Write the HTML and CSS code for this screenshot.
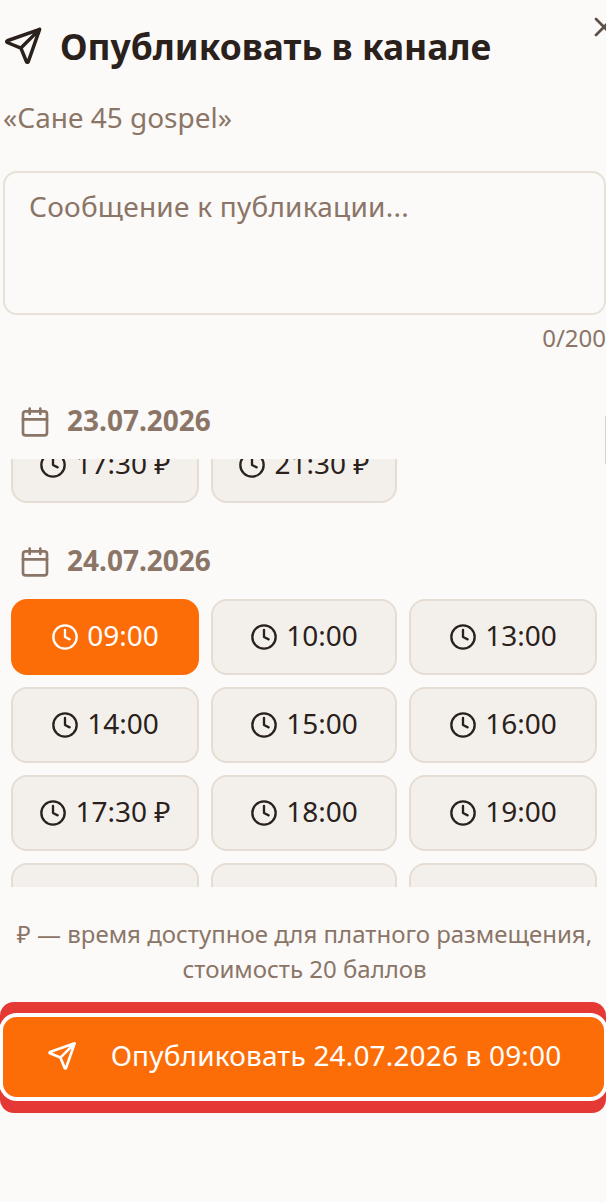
FILE: index.html
```html
<!DOCTYPE html>
<html lang="ru">
<head>
    <meta charset="UTF-8">
    <meta name="viewport" content="width=device-width, initial-scale=1.0">
    <title>Опубликовать в канале</title>
    <link rel="stylesheet" href="styles.css">
</head>
<body>
    <svg class="sprite" width="0" height="0">
        <symbol id="send" viewBox="0 0 24 24">
            <path d="M21.5 2.5 10.8 13.2M21.5 2.5 15 21a.55.55 0 0 1-1 .02l-3.2-7.82L3 10a.55.55 0 0 1 .02-1z"/>
        </symbol>
        <symbol id="clock" viewBox="0 0 24 24">
            <circle cx="12" cy="12" r="10"/>
            <path d="M12 6v6l4 2"/>
        </symbol>
        <symbol id="cal" viewBox="0 0 24 24">
            <path d="M8 2v4M16 2v4M3 10h18"/>
            <rect x="3" y="4" width="18" height="18" rx="2"/>
        </symbol>
    </svg>

    <div class="dialog">
        <button class="close" type="button">
            <svg viewBox="0 0 24 24" width="32" height="32"><path d="M18 6 6 18M6 6l12 12"/></svg>
        </button>

        <h2 class="title">
            <svg class="title-icon"><use href="#send"/></svg>
            Опубликовать в канале
        </h2>
        <p class="channel">«Сане 45 gospel»</p>

        <textarea class="message" placeholder="Сообщение к публикации..."></textarea>
        <div class="counter">0/200</div>

        <div class="scrollbar"></div>

        <div class="date-label">
            <svg class="cal-icon"><use href="#cal"/></svg>
            23.07.2026
        </div>

        <div class="slots-clip top-clip">
            <div class="slots first-row">
                <button class="slot" type="button"><svg class="clock-icon"><use href="#clock"/></svg>17:30 ₽</button>
                <button class="slot" type="button"><svg class="clock-icon"><use href="#clock"/></svg>21:30 ₽</button>
            </div>
        </div>

        <div class="date-label second">
            <svg class="cal-icon"><use href="#cal"/></svg>
            24.07.2026
        </div>

        <div class="slots-clip bottom-clip">
            <div class="slots">
                <button class="slot active" type="button"><svg class="clock-icon"><use href="#clock"/></svg>09:00</button>
                <button class="slot" type="button"><svg class="clock-icon"><use href="#clock"/></svg>10:00</button>
                <button class="slot" type="button"><svg class="clock-icon"><use href="#clock"/></svg>13:00</button>
                <button class="slot" type="button"><svg class="clock-icon"><use href="#clock"/></svg>14:00</button>
                <button class="slot" type="button"><svg class="clock-icon"><use href="#clock"/></svg>15:00</button>
                <button class="slot" type="button"><svg class="clock-icon"><use href="#clock"/></svg>16:00</button>
                <button class="slot" type="button"><svg class="clock-icon"><use href="#clock"/></svg>17:30 ₽</button>
                <button class="slot" type="button"><svg class="clock-icon"><use href="#clock"/></svg>18:00</button>
                <button class="slot" type="button"><svg class="clock-icon"><use href="#clock"/></svg>19:00</button>
                <button class="slot" type="button"></button>
                <button class="slot" type="button"></button>
                <button class="slot" type="button"></button>
            </div>
        </div>

        <p class="note">₽ — время доступное для платного размещения,<br>стоимость 20 баллов</p>

        <div class="submit-wrap">
            <button class="submit" type="button">
                <svg class="submit-icon"><use href="#send"/></svg>
                Опубликовать 24.07.2026 в 09:00
            </button>
        </div>
    </div>
</body>
</html>
```

FILE: styles.css
```css
html, body {
    margin: 0;
    height: 1202px;
    overflow: hidden;
}
body {
    background-color: #fcfaf8;
    color: #2b211c;
    font-family: "Noto Sans", sans-serif;
}
.sprite {
    display: block;
    height: 0;
}
svg {
    fill: none;
    stroke: currentColor;
    stroke-width: 2;
    stroke-linecap: round;
    stroke-linejoin: round;
    flex-shrink: 0;
}
.dialog {
    position: relative;
    padding: 23px 0 0 3px;
}
.close {
    position: absolute;
    top: 11px;
    right: -14px;
    padding: 0;
    border: none;
    background: none;
    color: #5c5048;
    display: flex;
}
.title {
    display: flex;
    align-items: center;
    gap: 16px;
    margin: 0;
    height: 46px;
    font-size: 35.4px;
    font-weight: 700;
    line-height: 46px;
}
.title-icon {
    width: 42px;
    height: 42px;
    margin-left: -1px;
}
.channel {
    margin: 26px 0 0;
    font-size: 28px;
    line-height: 44px;
    height: 44px;
    color: #8a7567;
}
.message {
    display: block;
    box-sizing: border-box;
    width: 603px;
    height: 144px;
    margin-top: 32px;
    padding: 14px 24px;
    border: 2px solid #e8e1d8;
    border-radius: 14px;
    background: #fcfaf8;
    font-family: inherit;
    font-size: 28px;
    letter-spacing: 0.24px;
    line-height: 38px;
    resize: none;
    outline: none;
}
.message::placeholder {
    color: #8a7567;
    opacity: 1;
}
.counter {
    margin-top: 7px;
    text-align: right;
    font-size: 24px;
    line-height: 32px;
    color: #8a7567;
    width: 603px;
}
.scrollbar {
    position: absolute;
    top: 416px;
    right: 0;
    width: 1px;
    height: 48px;
    background: #d9d2ca;
}
.date-label {
    display: flex;
    align-items: center;
    gap: 16px;
    box-sizing: border-box;
    height: 44px;
    padding-bottom: 2px;
    margin: 45px 0 0 16px;
    font-size: 28px;
    font-weight: 700;
    color: #8a7567;
}
.cal-icon {
    width: 32px;
    height: 32px;
    margin-top: 4px;
}
.second {
    margin-top: 36px;
}
.slots-clip {
    overflow: hidden;
    margin-left: 8px;
    width: 586px;
}
.top-clip {
    height: 44px;
    margin-top: 16px;
}
.bottom-clip {
    height: 288px;
    margin-top: 16px;
}
.slots {
    display: grid;
    grid-template-columns: 188px 186px 188px;
    gap: 12px;
}
.first-row {
    margin-top: -32px;
}
.slot {
    display: flex;
    align-items: center;
    justify-content: center;
    gap: 8px;
    height: 76px;
    padding: 0 0 4px;
    border: 2px solid #e5ddd3;
    border-radius: 16px;
    background-color: #f3f0eb;
    color: #2b211c;
    font-family: inherit;
    font-size: 28px;
}
.slot.active {
    background-color: #fc6d08;
    border-color: #fc6d08;
    color: #fff;
}
.clock-icon {
    width: 28px;
    height: 28px;
    margin-top: 4px;
}
.note {
    margin: 29px 0 0;
    text-align: center;
    font-size: 24px;
    line-height: 35px;
    color: #8a7567;
}
.submit-wrap {
    margin: 16px 0 0 -3px;
    width: 606px;
    height: 111px;
    box-sizing: border-box;
    padding: 15px 0 0 3px;
    background-color: #e53935;
    border-radius: 14px;
}
.submit {
    display: flex;
    align-items: center;
    justify-content: center;
    gap: 33px;
    box-sizing: border-box;
    width: 601px;
    height: 80px;
    padding: 0 0 4px;
    border: 0;
    border-radius: 14px;
    outline: 4px solid #fff;
    background-color: #fc6d08;
    color: #fff;
    font-family: inherit;
    font-size: 28px;
    letter-spacing: 0.16px;
}
.submit-icon {
    width: 32px;
    height: 32px;
    margin-top: 2px;
}
```
